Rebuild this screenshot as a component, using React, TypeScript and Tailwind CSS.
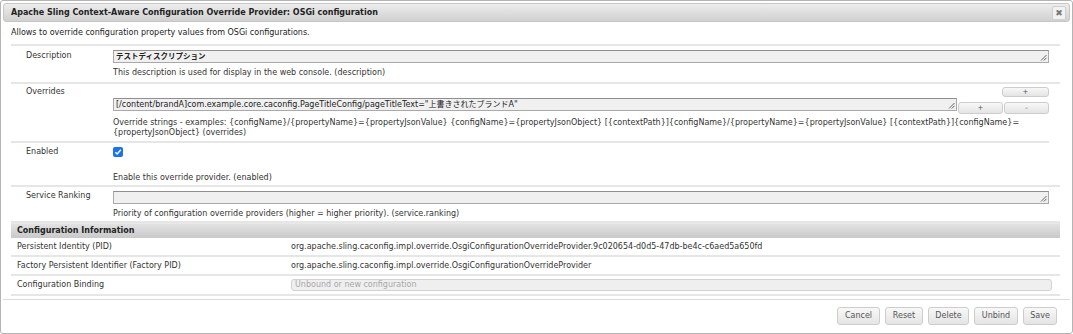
import React from "react";

const Grip = () => (
  <svg width="7" height="7" viewBox="0 0 7 7" className="absolute right-[1px] bottom-[1px]">
    <line x1="6.5" y1="1" x2="1" y2="6.5" stroke="#555" strokeWidth="0.9" />
    <line x1="6.5" y1="3.8" x2="3.8" y2="6.5" stroke="#555" strokeWidth="0.9" />
  </svg>
);

const TA = ({ value, className = "" }: { value?: string; className?: string }) => (
  <div
    className={`relative h-[13px] border border-[#a9a9a9] border-t-[#8f8f8f] bg-[#f0f0f0] pl-[2px] leading-[11px] text-[#222] overflow-hidden whitespace-nowrap ${className}`}
  >
    {value}
    <Grip />
  </div>
);

const Btn = ({ label, className = "" }: { label: string; className?: string }) => (
  <div
    className={`flex items-center justify-center rounded-[3px] border border-[#cdcdcd] bg-gradient-to-b from-[#f8f8f8] to-[#e4e4e4] text-[#555] ${className}`}
  >
    {label}
  </div>
);

export default function App() {
  return (
    <div
      className="w-[1073px] h-[334px] bg-white text-[8px] leading-[10px] text-[#333] overflow-hidden"
      style={{ fontFamily: '"DejaVu Sans", "Noto Sans CJK JP", sans-serif' }}
    >
      <div className="h-full border border-[#b4b4b4] rounded-[3px] p-[2px] flex flex-col">
        {/* title bar */}
        <div className="h-[19px] shrink-0 flex items-center justify-between rounded-[3px] border border-[#c6c6c6] bg-gradient-to-b from-[#ededed] to-[#d0d0d0] pl-[7px] pr-[3px]">
          <span className="font-bold text-[#222]">
            Apache Sling Context-Aware Configuration Override Provider: OSGi configuration
          </span>
          <div className="w-[14px] h-[14px] flex items-center justify-center rounded-[2px] border border-[#d0d0d0] bg-[#f2f2f2] text-[#777] text-[9px]">
            ✖
          </div>
        </div>

        {/* content */}
        <div className="flex-1 pl-[8px] pr-[10px] border-b border-[#dcdcdc]">
          <div className="mt-[6px] mb-[6px] text-[#222]">
            Allows to override configuration property values from OSGi configurations.
          </div>

          <div className="border-t-2 border-[#e6e6e6]">
            {/* Description */}
            <div className="flex border-b-2 border-[#e6e6e6]">
              <div className="w-[102px] shrink-0 pl-[15px] pt-[5px]">Description</div>
              <div className="flex-1 pr-[11px] pt-[4px] pb-[4px]">
                <TA value="テストディスクリプション" className="font-bold text-[7.5px]" />
                <div className="mt-[5px]">This description is used for display in the web console. (description)</div>
              </div>
            </div>

            {/* Overrides */}
            <div className="flex border-b-2 border-[#e6e6e6] w-[1038px]">
              <div className="w-[102px] shrink-0 pl-[15px] pt-[3px]">Overrides</div>
              <div className="flex-1 pt-[3px] pb-[3px]">
                <div className="flex justify-end">
                  <Btn label="+" className="w-[47px] h-[10px] text-[7px] leading-[8px]" />
                </div>
                <div className="flex items-start mt-[1px]">
                  <TA
                    value={'[/content/brandA]com.example.core.caconfig.PageTitleConfig/pageTitleText="上書きされたブランドA"'}
                    className="flex-1"
                  />
                  <Btn label="+" className="w-[45px] h-[12px] mt-[4px] ml-[1px] text-[7px]" />
                  <Btn label="-" className="w-[45px] h-[12px] mt-[4px] ml-[1px] text-[7px]" />
                </div>
                <div className="mt-[4px]">
                  Override strings - examples: {"{configName}/{propertyName}={propertyJsonValue} {configName}={propertyJsonObject} [{contextPath}]{configName}/{propertyName}={propertyJsonValue} [{contextPath}]{configName}="}
                  <br />
                  {"{propertyJsonObject} (overrides)"}
                </div>
              </div>
            </div>

            {/* Enabled */}
            <div className="flex border-b-2 border-[#e6e6e6]">
              <div className="w-[102px] shrink-0 pl-[15px] pt-[4px]">Enabled</div>
              <div className="flex-1 pt-[4px] pb-[2px]">
                <div className="w-[10px] h-[10px] rounded-[2px] bg-[#1a73e8] flex items-center justify-center">
                  <svg width="8" height="8" viewBox="0 0 8 8">
                    <path d="M1.3 4.2 L3.2 6 L6.8 1.8" fill="none" stroke="#fff" strokeWidth="1.4" />
                  </svg>
                </div>
                <div className="mt-[16px]">Enable this override provider. (enabled)</div>
              </div>
            </div>

            {/* Service Ranking */}
            <div className="flex border-b-2 border-[#e6e6e6]">
              <div className="w-[102px] shrink-0 pl-[15px] pt-[4px]">Service Ranking</div>
              <div className="flex-1 pr-[11px] pt-[4px] pb-[2px]">
                <TA className="h-[12px]" />
                <div className="mt-[5px]">Priority of configuration override providers (higher = higher priority). (service.ranking)</div>
              </div>
            </div>
          </div>

          {/* Configuration Information */}
          <div className="h-[15px] flex items-center pl-[6px] font-bold text-[#222] border-t border-[#e8e8e8] bg-gradient-to-b from-[#e2e2e2] to-[#c9c9c9]">
            Configuration Information
          </div>
          <div className="flex border-b-2 border-[#e6e6e6] pt-[4px] pb-[3px]">
            <div className="w-[280px] shrink-0 pl-[6px]">Persistent Identity (PID)</div>
            <div>org.apache.sling.caconfig.impl.override.OsgiConfigurationOverrideProvider.9c020654-d0d5-47db-be4c-c6aed5a650fd</div>
          </div>
          <div className="flex border-b-2 border-[#e6e6e6] pt-[4px] pb-[3px]">
            <div className="w-[280px] shrink-0 pl-[6px]">Factory Persistent Identifier (Factory PID)</div>
            <div>org.apache.sling.caconfig.impl.override.OsgiConfigurationOverrideProvider</div>
          </div>
          <div className="flex items-center border-b-2 border-[#e6e6e6] pt-[3px] pb-[3px]">
            <div className="w-[280px] shrink-0 pl-[6px]">Configuration Binding</div>
            <div className="flex-1 mr-[8px] h-[12px] rounded-[3px] border border-[#d2d2d2] bg-[#efefef] pl-[3px] text-[#a8a8a8] leading-[10px]">
              Unbound or new configuration
            </div>
          </div>
        </div>

        {/* button pane */}
        <div className="h-[31px] shrink-0 flex items-start justify-end gap-[5px] pt-[7px] pr-[13px]">
          <Btn label="Cancel" className="w-[43px] h-[18px]" />
          <Btn label="Reset" className="w-[38px] h-[18px]" />
          <Btn label="Delete" className="w-[41px] h-[18px]" />
          <Btn label="Unbind" className="w-[44px] h-[18px]" />
          <Btn label="Save" className="w-[34px] h-[18px]" />
        </div>
      </div>
    </div>
  );
}
